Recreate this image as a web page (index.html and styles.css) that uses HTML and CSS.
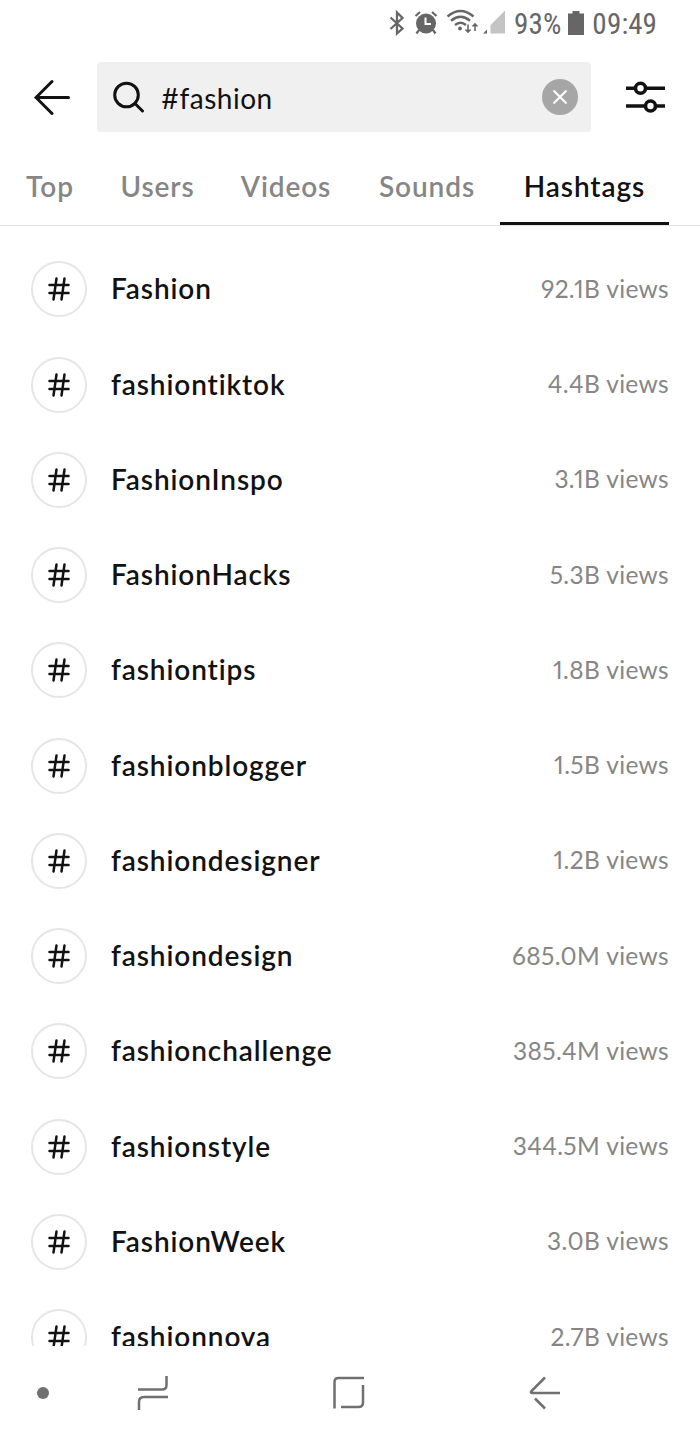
FILE: index.html
```
<!DOCTYPE html>
<html lang="en">
<head>
    <meta charset="UTF-8">
    <meta name="viewport" content="width=device-width, initial-scale=1.0">
    <title>#fashion | Hashtags</title>
    <link rel="stylesheet" href="styles.css">
</head>
<body>
    <div class="status-bar">
        <svg class="status-icons" width="126" height="30" viewBox="0 0 126 30">
            <!-- Bluetooth -->
            <path d="M2.5 9.500L14.500 20.500L9 25.500V4.500L14.500 10L2.500 21" fill="none" stroke="#666" stroke-width="2.300"/>
            <!-- Alarm -->
            <circle cx="38" cy="15.5" r="10" fill="#666"/>
            <path d="M27.500 8L32 4M48.500 8L44 4M31 22L28.500 25.500M45 22L47.500 25.500" stroke="#666" stroke-width="2.200"/>
            <path d="M37.500 9.500V16H43" fill="none" stroke="#fff" stroke-width="2"/>
            <!-- Wi-Fi -->
            <g fill="none" stroke="#666" stroke-width="2.400">
                <path d="M59.500 8.500Q72.500 -2.500 85.500 8.500M63 12.700Q72.500 5 82 12.700M67 17Q72.500 12.500 78 17"/>
                <path d="M80 16.500V24M77.500 21.500L80 24L82.500 21.500M87 23V16M84.500 18.500L87 16L89.500 18.500" stroke-width="1.600"/>
            </g>
            <circle cx="72" cy="20.500" r="1.900" fill="#666"/>
            <!-- Signal -->
            <path d="M95 25.500H99V21.500Z" fill="#666"/>
            <path d="M102.500 25.500H117V2.500L102.500 17Z" fill="#c4c4c4"/>
        </svg>
        <span class="battery-level">93%</span>
        <svg class="battery" width="16" height="24" viewBox="0 0 16 24">
            <path d="M0 2.500H4.500V0H11.500V2.500H16V24H0Z" fill="#666"/>
        </svg>
        <span class="clock">09:49</span>
    </div>

    <header>
        <svg class="back" width="36" height="36" viewBox="0 0 36 36">
            <path d="M18 2.500L2 18.500L18 34.500M2 18.500H34.500"/>
        </svg>
        <div class="search-box">
            <svg class="search-icon" width="32" height="32" viewBox="0 0 32 32">
                <circle cx="13.500" cy="14" r="11.800"/>
                <path d="M22 22.500L29.500 30"/>
            </svg>
            <span class="query">#fashion</span>
            <svg class="clear" width="36" height="36" viewBox="0 0 36 36">
                <circle cx="18" cy="18" r="18" fill="#a6a6a6"/>
                <path d="M11.500 11.500L24.500 24.500M24.500 11.500L11.500 24.500" stroke="#fff" stroke-width="2"/>
            </svg>
        </div>
        <svg class="filter" width="40" height="34" viewBox="0 0 40 34">
            <path d="M1 8.300H40M1 26H40"/>
            <circle cx="15.500" cy="8.300" r="5"/>
            <circle cx="25.500" cy="26" r="5"/>
        </svg>
    </header>

    <nav class="tabs">
        <span class="tab">Top</span>
        <span class="tab">Users</span>
        <span class="tab">Videos</span>
        <span class="tab">Sounds</span>
        <span class="tab active">Hashtags</span>
    </nav>

    <svg class="symbols">
        <symbol id="hash" viewBox="0 0 22 24">
            <path d="M8.500 1.500L5.500 22.500M16.500 1.500L13.500 22.500M1.500 8H20.500M1.500 16H20.500" fill="none" stroke="#121212" stroke-width="2.500" stroke-linecap="round"/>
        </symbol>
    </svg>

    <main class="hashtag-list">
        <div class="row"><span class="badge"><svg><use href="#hash"/></svg></span><span class="name">Fashion</span><span class="views">92.1B views</span></div>
        <div class="row"><span class="badge"><svg><use href="#hash"/></svg></span><span class="name">fashiontiktok</span><span class="views">4.4B views</span></div>
        <div class="row"><span class="badge"><svg><use href="#hash"/></svg></span><span class="name">FashionInspo</span><span class="views">3.1B views</span></div>
        <div class="row"><span class="badge"><svg><use href="#hash"/></svg></span><span class="name">FashionHacks</span><span class="views">5.3B views</span></div>
        <div class="row"><span class="badge"><svg><use href="#hash"/></svg></span><span class="name">fashiontips</span><span class="views">1.8B views</span></div>
        <div class="row"><span class="badge"><svg><use href="#hash"/></svg></span><span class="name">fashionblogger</span><span class="views">1.5B views</span></div>
        <div class="row"><span class="badge"><svg><use href="#hash"/></svg></span><span class="name">fashiondesigner</span><span class="views">1.2B views</span></div>
        <div class="row"><span class="badge"><svg><use href="#hash"/></svg></span><span class="name">fashiondesign</span><span class="views">685.0M views</span></div>
        <div class="row"><span class="badge"><svg><use href="#hash"/></svg></span><span class="name">fashionchallenge</span><span class="views">385.4M views</span></div>
        <div class="row"><span class="badge"><svg><use href="#hash"/></svg></span><span class="name">fashionstyle</span><span class="views">344.5M views</span></div>
        <div class="row"><span class="badge"><svg><use href="#hash"/></svg></span><span class="name">FashionWeek</span><span class="views">3.0B views</span></div>
        <div class="row"><span class="badge"><svg><use href="#hash"/></svg></span><span class="name">fashionnova</span><span class="views">2.7B views</span></div>
    </main>

    <footer class="system-nav">
        <span class="dot"></span>
        <svg class="recents" width="32" height="36" viewBox="0 0 32 36">
            <path d="M1 14.500H25Q29.500 14.500 29.500 10V1M31 22H7Q2 22 2 27V35"/>
        </svg>
        <svg class="home" width="32" height="34" viewBox="0 0 32 34">
            <path d="M1.500 32.500V6Q1.500 2 5.500 2H31M30 9V26.500Q30 31 25.500 31H8"/>
        </svg>
        <svg class="nav-back" width="32" height="34" viewBox="0 0 32 34">
            <path d="M16 1.500L2.500 15Q1 17 3 17H31M6 22.500L16 32.500"/>
        </svg>
    </footer>
</body>
</html>
```
FILE: styles.css
```
:root {
    --dark: #121212;
    --gray: #868686;
    --icon: #707070;
    --light: #fff;
}

* {
    margin: 0;
    padding: 0;
    box-sizing: border-box;
}

body {
    font-family: Lato, 'Open Sans', sans-serif;
    font-variant-ligatures: none;
    font-variant-numeric: proportional-nums;
    background: var(--light);
    color: var(--dark);
    width: 700px;
    height: 1439px;
    display: flex;
    flex-direction: column;
    overflow: hidden;
}

svg {
    display: block;
    flex: none;
}

.status-bar {
    height: 48px;
    padding-left: 388px;
    display: flex;
    align-items: center;
    font-family: 'Roboto Condensed', Roboto, sans-serif;
    font-stretch: 75%;
    font-size: 29px;
    color: #666;
}

.status-icons,
.battery {
    margin-bottom: 2px;
}

.battery-level {
    width: 54px;
}

.clock {
    margin-left: 8px;
}

header {
    height: 100px;
    padding: 14px 34px 16px;
    display: flex;
    align-items: center;
}

.back,
.search-icon,
.filter {
    fill: none;
    stroke: var(--dark);
    stroke-width: 3;
    stroke-linecap: round;
}

.filter {
    margin-left: 34px;
    stroke-width: 3.6;
    stroke-linecap: butt;
}

.filter circle {
    fill: var(--light);
}

.search-box {
    width: 494px;
    height: 70px;
    margin-left: 27px;
    padding: 0 13px 0 16px;
    display: flex;
    align-items: center;
    background: #f0f0f0;
    border-radius: 4px;
}

.query {
    flex: 1;
    margin-left: 16px;
    padding-top: 1px;
    font-size: 28px;
    letter-spacing: 0.500px;
}

.tabs {
    height: 78px;
    padding-left: 3px;
    display: grid;
    grid-template-columns: 94px 121px 136px 146px 169px;
    border-bottom: 1px solid #e3e3e3;
}

.tab {
    height: 77px;
    line-height: 76px;
    text-align: center;
    font-size: 28px;
    font-weight: 600;
    letter-spacing: 0.900px;
    color: var(--gray);
}

.tab.active {
    color: var(--dark);
    border-bottom: 3px solid var(--dark);
}

.symbols {
    display: none;
}

.hashtag-list {
    flex: 1;
    min-height: 0;
    padding: 15.700px 31px 0;
    overflow: hidden;
}

.row {
    height: 95.270px;
    display: flex;
    align-items: center;
}

.badge {
    width: 56px;
    height: 56px;
    display: flex;
    align-items: center;
    justify-content: center;
    border: 2px solid #e6e6e6;
    border-radius: 50%;
}

.badge svg {
    width: 22px;
    height: 24px;
}

.name {
    flex: 1;
    margin-left: 24px;
    padding-bottom: 2px;
    font-size: 28px;
    font-weight: 600;
    letter-spacing: 0.900px;
}

.views {
    padding-bottom: 2px;
    font-size: 24.500px;
    letter-spacing: 0.350px;
    color: var(--gray);
}

.system-nav {
    height: 93px;
    padding-left: 37px;
    display: flex;
    align-items: center;
}

.system-nav svg {
    fill: none;
    stroke: var(--icon);
    stroke-width: 2.500;
}

.dot {
    width: 12px;
    height: 12px;
    border-radius: 50%;
    background: var(--icon);
}

.recents {
    margin-left: 88px;
}

.home {
    margin-left: 164px;
}

.nav-back {
    margin-left: 164px;
}
```
